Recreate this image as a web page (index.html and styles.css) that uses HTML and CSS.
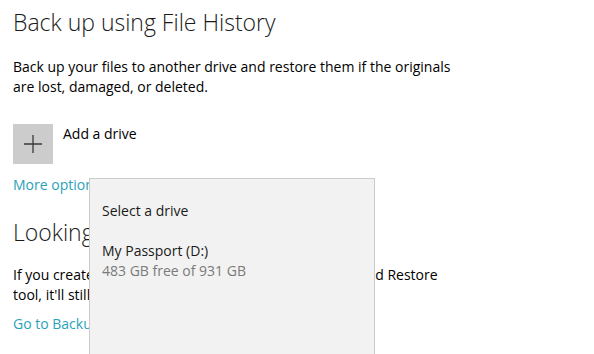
FILE: index.html
```html
<!DOCTYPE html>
<html>
<head>
<meta charset="utf-8">
<link rel="stylesheet" href="styles.css">
</head>
<body>
<main class="page">
  <h1 class="title first">Back up using File History</h1>
  <p class="text para1">Back up your files to another drive and restore them if the originals are lost, damaged, or deleted.</p>
  <div class="add-row">
    <div class="add-tile">
      <svg width="18" height="18" viewBox="0 0 18 18"><path d="M9 0V18M0 9H18" stroke="#3a3a3a" stroke-width="1.3" fill="none"/></svg>
    </div>
    <span class="add-label">Add a drive</span>
  </div>
  <a class="link more">More options</a>
  <h1 class="title second">Looking for an older backup?</h1>
  <p class="text para2">If you created a backup using the Windows 7 Backup and Restore tool, it'll still work in Windows 10.</p>
  <a class="link go">Go to Backup and Restore (Windows 7)</a>
</main>
<div class="flyout">
  <div class="flyout-head">Select a drive</div>
  <div class="drive">
    <div class="drive-name">My Passport (D:)</div>
    <div class="drive-info">483 GB free of 931 GB</div>
  </div>
</div>
</body>
</html>
```

FILE: styles.css
```css
html, body {
  margin: 0;
  padding: 0;
  background: #ffffff;
  width: 594px;
  height: 354px;
  overflow: hidden;
}
body {
  font-family: "Open Sans", "Noto Sans", sans-serif;
  color: #000;
  position: relative;
}
.page {
  display: flex;
  flex-direction: column;
  align-items: flex-start;
  padding-left: 13px;
}
.title {
  margin: 0;
  font-size: 23px;
  font-weight: 300;
  line-height: 32px;
  color: #1a1a1a;
  white-space: nowrap;
}
.first { margin-top: 6px; }
.text {
  margin: 0;
  font-size: 14px;
  line-height: 20px;
  width: 446px;
}
.para1 { margin-top: 19px; }
.add-row {
  display: flex;
  align-items: flex-start;
  margin-top: 27px;
  gap: 10px;
}
.add-tile {
  width: 40px;
  height: 40px;
  background: #cccccc;
  display: flex;
  align-items: center;
  justify-content: center;
}
.add-label {
  font-size: 14px;
  line-height: 20px;
}
.link {
  color: #2aa3b8;
  font-size: 14px;
  line-height: 20px;
  white-space: nowrap;
}
.more { margin-top: 11px; }
.second { margin-top: 21px; }
.para2 { margin-top: 17px; }
.go { margin-top: 9px; }

.flyout {
  position: absolute;
  left: 89px;
  top: 178px;
  width: 286px;
  height: 200px;
  box-sizing: border-box;
  background: #f2f2f2;
  border: 1px solid #cccccc;
  padding: 22px 12px 0 12px;
  font-size: 14px;
  line-height: 20px;
}
.flyout-head { color: #1a1a1a; }
.drive { margin-top: 20px; }
.drive-name { color: #1a1a1a; }
.drive-info { color: #7a7a7a; }
```
